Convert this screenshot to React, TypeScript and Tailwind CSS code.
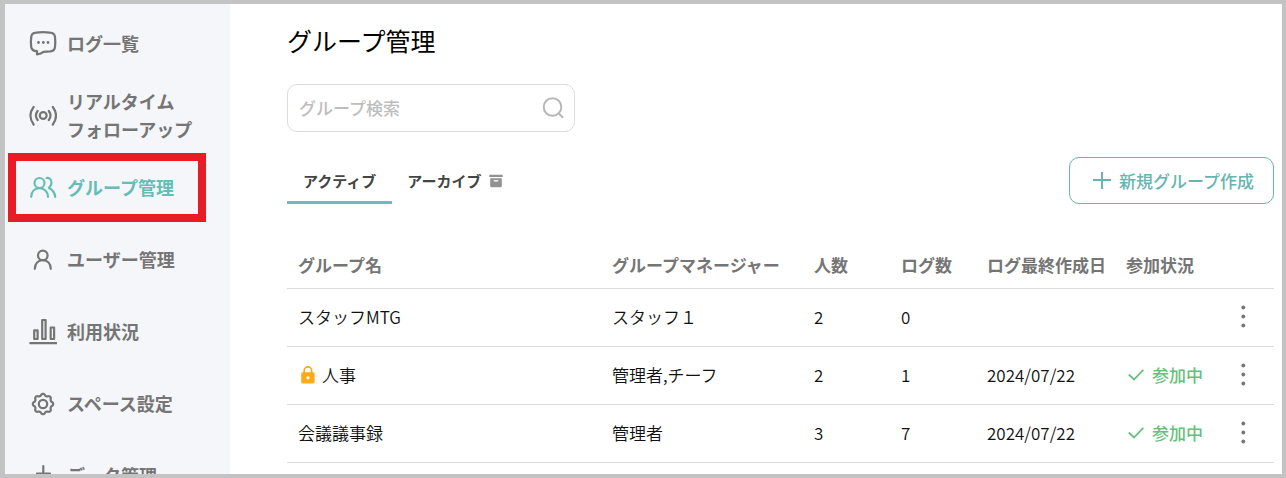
import React, { useState } from "react";

type IconProps = { children: React.ReactNode };

function NavIcon({ children }: IconProps) {
  return (
    <svg
      className="h-7 w-7 shrink-0"
      viewBox="0 0 28 28"
      fill="none"
      stroke="currentColor"
      strokeWidth="2.2"
      strokeLinecap="round"
      strokeLinejoin="round"
      aria-hidden="true"
    >
      {children}
    </svg>
  );
}

const gearPath =
  Array.from({ length: 96 }, (_, i) => {
    const angle = (i / 96) * Math.PI * 2;
    const wave = Math.cos(8 * angle);
    const radius = 9.3 + 0.9 * Math.sign(wave) * Math.pow(Math.abs(wave), 0.7);
    const x = 14 + radius * Math.cos(angle);
    const y = 14 + radius * Math.sin(angle);
    return `${i === 0 ? "M" : "L"}${x.toFixed(2)} ${y.toFixed(2)}`;
  }).join("") + "Z";

const navItems: { label: string[]; icon: React.ReactNode; active?: boolean }[] = [
  {
    label: ["ログ一覧"],
    icon: (
      <NavIcon>
        <path d="M7 2.6Q14 1.8 21 2.6Q25.6 2.9 26 7Q26.6 12 26 17Q25.6 21 21.5 21.4Q17 21.6 14.5 21.8Q12 23.9 8 24.4V21.2Q2.7 21 2.2 17Q1.6 12 2.2 7Q2.6 3 7 2.6Z" />
        <g fill="currentColor" stroke="none">
          <circle cx="9.5" cy="12.5" r="1.4" />
          <circle cx="14.3" cy="12.5" r="1.4" />
          <circle cx="19" cy="12.5" r="1.4" />
        </g>
      </NavIcon>
    ),
  },
  {
    label: ["リアルタイム", "フォローアップ"],
    icon: (
      <NavIcon>
        <circle cx="14.2" cy="13.5" r="3.4" />
        <path d="M8.6 9Q5.2 13.5 8.6 18M19.8 9Q23.2 13.5 19.8 18M4.6 5Q-1.8 13.5 4.6 22.5M23.8 5Q30.2 13.5 23.8 22.5" />
      </NavIcon>
    ),
  },
  {
    label: ["グループ管理"],
    active: true,
    icon: (
      <NavIcon>
        <circle cx="10.5" cy="9" r="5" />
        <path d="M2.2 22.8C2.4 17.6 5.8 14.2 10.5 14.2S18.8 17.6 19 22.8" />
        <path d="M17.5 4C20.3 3.6 22.6 5.6 22.5 8.8C22.5 11 21.5 12.4 19.8 13.8C23.5 15.8 25.8 18.6 26.2 22.8" />
      </NavIcon>
    ),
  },
  {
    label: ["ユーザー管理"],
    icon: (
      <NavIcon>
        <circle cx="13.8" cy="9.4" r="4.8" />
        <path d="M5.8 22.8C6 17.6 9.2 14.2 13.8 14.2S21.6 17.6 21.8 22.8" />
      </NavIcon>
    ),
  },
  {
    label: ["利用状況"],
    icon: (
      <NavIcon>
        <path d="M1.3 25.2H27.5M5.2 12.4H8.600V21H5.2ZM13.2 2H16.6V21H13.2ZM21.7 9.5H25.1V21H21.7Z" />
      </NavIcon>
    ),
  },
  {
    label: ["スペース設定"],
    icon: (
      <NavIcon>
        <path d={gearPath} />
        <circle cx="14" cy="14" r="4.2" />
      </NavIcon>
    ),
  },
  {
    label: ["データ管理"],
    icon: (
      <NavIcon>
        <path d="M14.3 4V18M8 11.5H21M5 20V25H23V20" />
      </NavIcon>
    ),
  },
];

type Group = {
  name: string;
  locked?: boolean;
  manager: string;
  members: number;
  logs: number;
  date?: string;
  joined?: boolean;
};

const groups: Group[] = [
  { name: "スタッフMTG", manager: "スタッフ１", members: 2, logs: 0 },
  { name: "人事", locked: true, manager: "管理者,チーフ", members: 2, logs: 1, date: "2024/07/22", joined: true },
  { name: "会議議事録", manager: "管理者", members: 3, logs: 7, date: "2024/07/22", joined: true },
];

const headings = ["グループ名", "グループマネージャー", "人数", "ログ数", "ログ最終作成日", "参加状況"];

function Sidebar() {
  return (
    <nav className="w-[225px] shrink-0 bg-[#f4f6fa] pt-1">
      <ul>
        {navItems.map((item) => (
          <li key={item.label[0]} className="relative">
            <a
              href="#"
              aria-current={item.active ? "page" : undefined}
              className={`flex h-[72px] items-center gap-2.5 pl-6 text-[18px] leading-7 font-bold whitespace-nowrap ${
                item.active ? "text-[#65bdb5]" : "text-[#757575]"
              }`}
            >
              {item.icon}
              <span className="pb-0.5">
                {item.label.map((line) => (
                  <span key={line} className="block">
                    {line}
                  </span>
                ))}
              </span>
            </a>
            {item.active && (
              <span className="pointer-events-none absolute top-px right-6 bottom-0.5 left-[3px] border-8 border-[#e81c24]" />
            )}
          </li>
        ))}
      </ul>
    </nav>
  );
}

function GroupTable() {
  return (
    <table className="mt-10 w-full table-fixed border-collapse text-left text-[17px] leading-6 font-[350] whitespace-nowrap text-[#111]">
      <colgroup>
        <col />
        <col className="w-[202px]" />
        <col className="w-[87px]" />
        <col className="w-[86px]" />
        <col className="w-[139px]" />
        <col className="w-[97px]" />
        <col className="w-[62px]" />
      </colgroup>
      <thead>
        <tr className="h-11 border-b border-[#dcdcdc] text-[#757575]">
          {headings.map((heading) => (
            <th key={heading} scope="col" className="pb-0.5 pl-[11px] font-bold">
              {heading}
            </th>
          ))}
          <td />
        </tr>
      </thead>
      <tbody>
        {groups.map((group) => (
          <tr key={group.name} className="h-[58px] border-b border-[#dcdcdc]">
            <td className="pl-[11px]">
              <span className="flex items-center gap-1.5">
                {group.locked && (
                  <svg className="ml-0.5 h-[18px] w-4" viewBox="0 0 16 18" aria-label="非公開">
                    <path d="M4.2 7V4.6A3.7 3.7 0 0 1 11.6 4.6V7" fill="none" stroke="#fbab18" strokeWidth="1.7" />
                    <rect x="1.2" y="6.2" width="13.4" height="11.3" rx="1.6" fill="#fbab18" />
                    <circle cx="8" cy="11.8" r="1.6" fill="#fff" />
                  </svg>
                )}
                {group.name}
              </span>
            </td>
            <td className="pl-[11px]">{group.manager}</td>
            <td className="pl-[11px]">{group.members}</td>
            <td className="pl-[11px]">{group.logs}</td>
            <td className="pl-[11px]">{group.date}</td>
            <td className="pl-[11px]">
              {group.joined && (
                <span className="flex items-center gap-2 font-medium text-[#66bf7b]">
                  <svg className="ml-0.5 h-4 w-4" viewBox="0 0 16 16" fill="none" stroke="currentColor" strokeWidth="1.8" aria-hidden="true">
                    <path d="M0.8 7.5L6 12.5L15.3 2.8" />
                  </svg>
                  参加中
                </span>
              )}
            </td>
            <td>
              <button type="button" aria-label={`${group.name}のメニュー`} className="ml-[19px] flex h-7 w-6 items-center justify-center">
                <svg className="h-6 w-6" viewBox="0 0 24 24" fill="#757575" aria-hidden="true">
                  <circle cx="12.3" cy="2.5" r="1.9" />
                  <circle cx="12.3" cy="11.5" r="1.9" />
                  <circle cx="12.3" cy="20.5" r="1.9" />
                </svg>
              </button>
            </td>
          </tr>
        ))}
      </tbody>
    </table>
  );
}

export default function App() {
  const [tab, setTab] = useState<"active" | "archive">("active");
  return (
    <div className="flex h-screen overflow-hidden border-4 border-l-[5px] border-[#c3c3c3] bg-white font-['Noto_Sans_CJK_JP',sans-serif]">
      <Sidebar />
      <main className="min-w-0 flex-1 pt-[18px] pr-2 pl-[57px]">
        <h1 className="text-[25px] leading-9 font-normal text-black">グループ管理</h1>
        <div className="relative mt-[26px] w-72">
          <input
            type="search"
            aria-label="グループ検索"
            placeholder="グループ検索"
            className="h-12 w-full rounded-[10px] border border-[#dcdcdc] bg-white pr-11 pb-0.5 pl-[11px] text-[17px] font-medium text-[#333] outline-none placeholder:text-[#bdbdbd]"
          />
          <svg
            className="pointer-events-none absolute top-3 right-2.5 h-6 w-6"
            viewBox="0 0 24 24"
            fill="none"
            stroke="#b8b8b8"
            strokeWidth="2"
            aria-hidden="true"
          >
            <circle cx="11.5" cy="11" r="8.8" />
            <path d="M17.6 17.3L22 21.8" />
          </svg>
        </div>
        <div className="mt-[25px] flex items-start justify-between">
          <div role="tablist" className="flex text-[15px] leading-6 font-bold text-[#444]">
            <button
              type="button"
              role="tab"
              aria-selected={tab === "active"}
              onClick={() => setTab("active")}
              className={`h-[47px] border-b-[3px] px-4 pt-1 ${tab === "active" ? "border-[#6dbdb6]" : "border-transparent"}`}
            >
              アクティブ
            </button>
            <button
              type="button"
              role="tab"
              aria-selected={tab === "archive"}
              onClick={() => setTab("archive")}
              className={`flex h-[47px] items-center gap-2 border-b-[3px] px-[15px] pt-1 ${
                tab === "archive" ? "border-[#6dbdb6]" : "border-transparent"
              }`}
            >
              アーカイブ
              <svg className="h-3.5 w-3.5" viewBox="0 0 14 14" aria-hidden="true">
                <path d="M0.3 0.8H13.7V3H0.3ZM1.2 4.2H12.8V12Q12.8 13.3 11.5 13.3H2.5Q1.2 13.3 1.2 12Z" fill="#929292" />
                <path d="M4.8 6.8H9.2" stroke="#fff" strokeWidth="1.4" />
              </svg>
            </button>
          </div>
          <button
            type="button"
            className="flex h-[47px] w-[205px] items-center justify-center gap-2 rounded-[10px] border border-[#65b5b0] pl-1 text-[17px] font-medium whitespace-nowrap text-[#65b5b0]"
          >
            <svg className="h-[18px] w-[18px]" viewBox="0 0 18 18" fill="none" stroke="currentColor" strokeWidth="2" aria-hidden="true">
              <path d="M9 0V17M0 8H18" />
            </svg>
            新規グループ作成
          </button>
        </div>
        <GroupTable />
      </main>
    </div>
  );
}
